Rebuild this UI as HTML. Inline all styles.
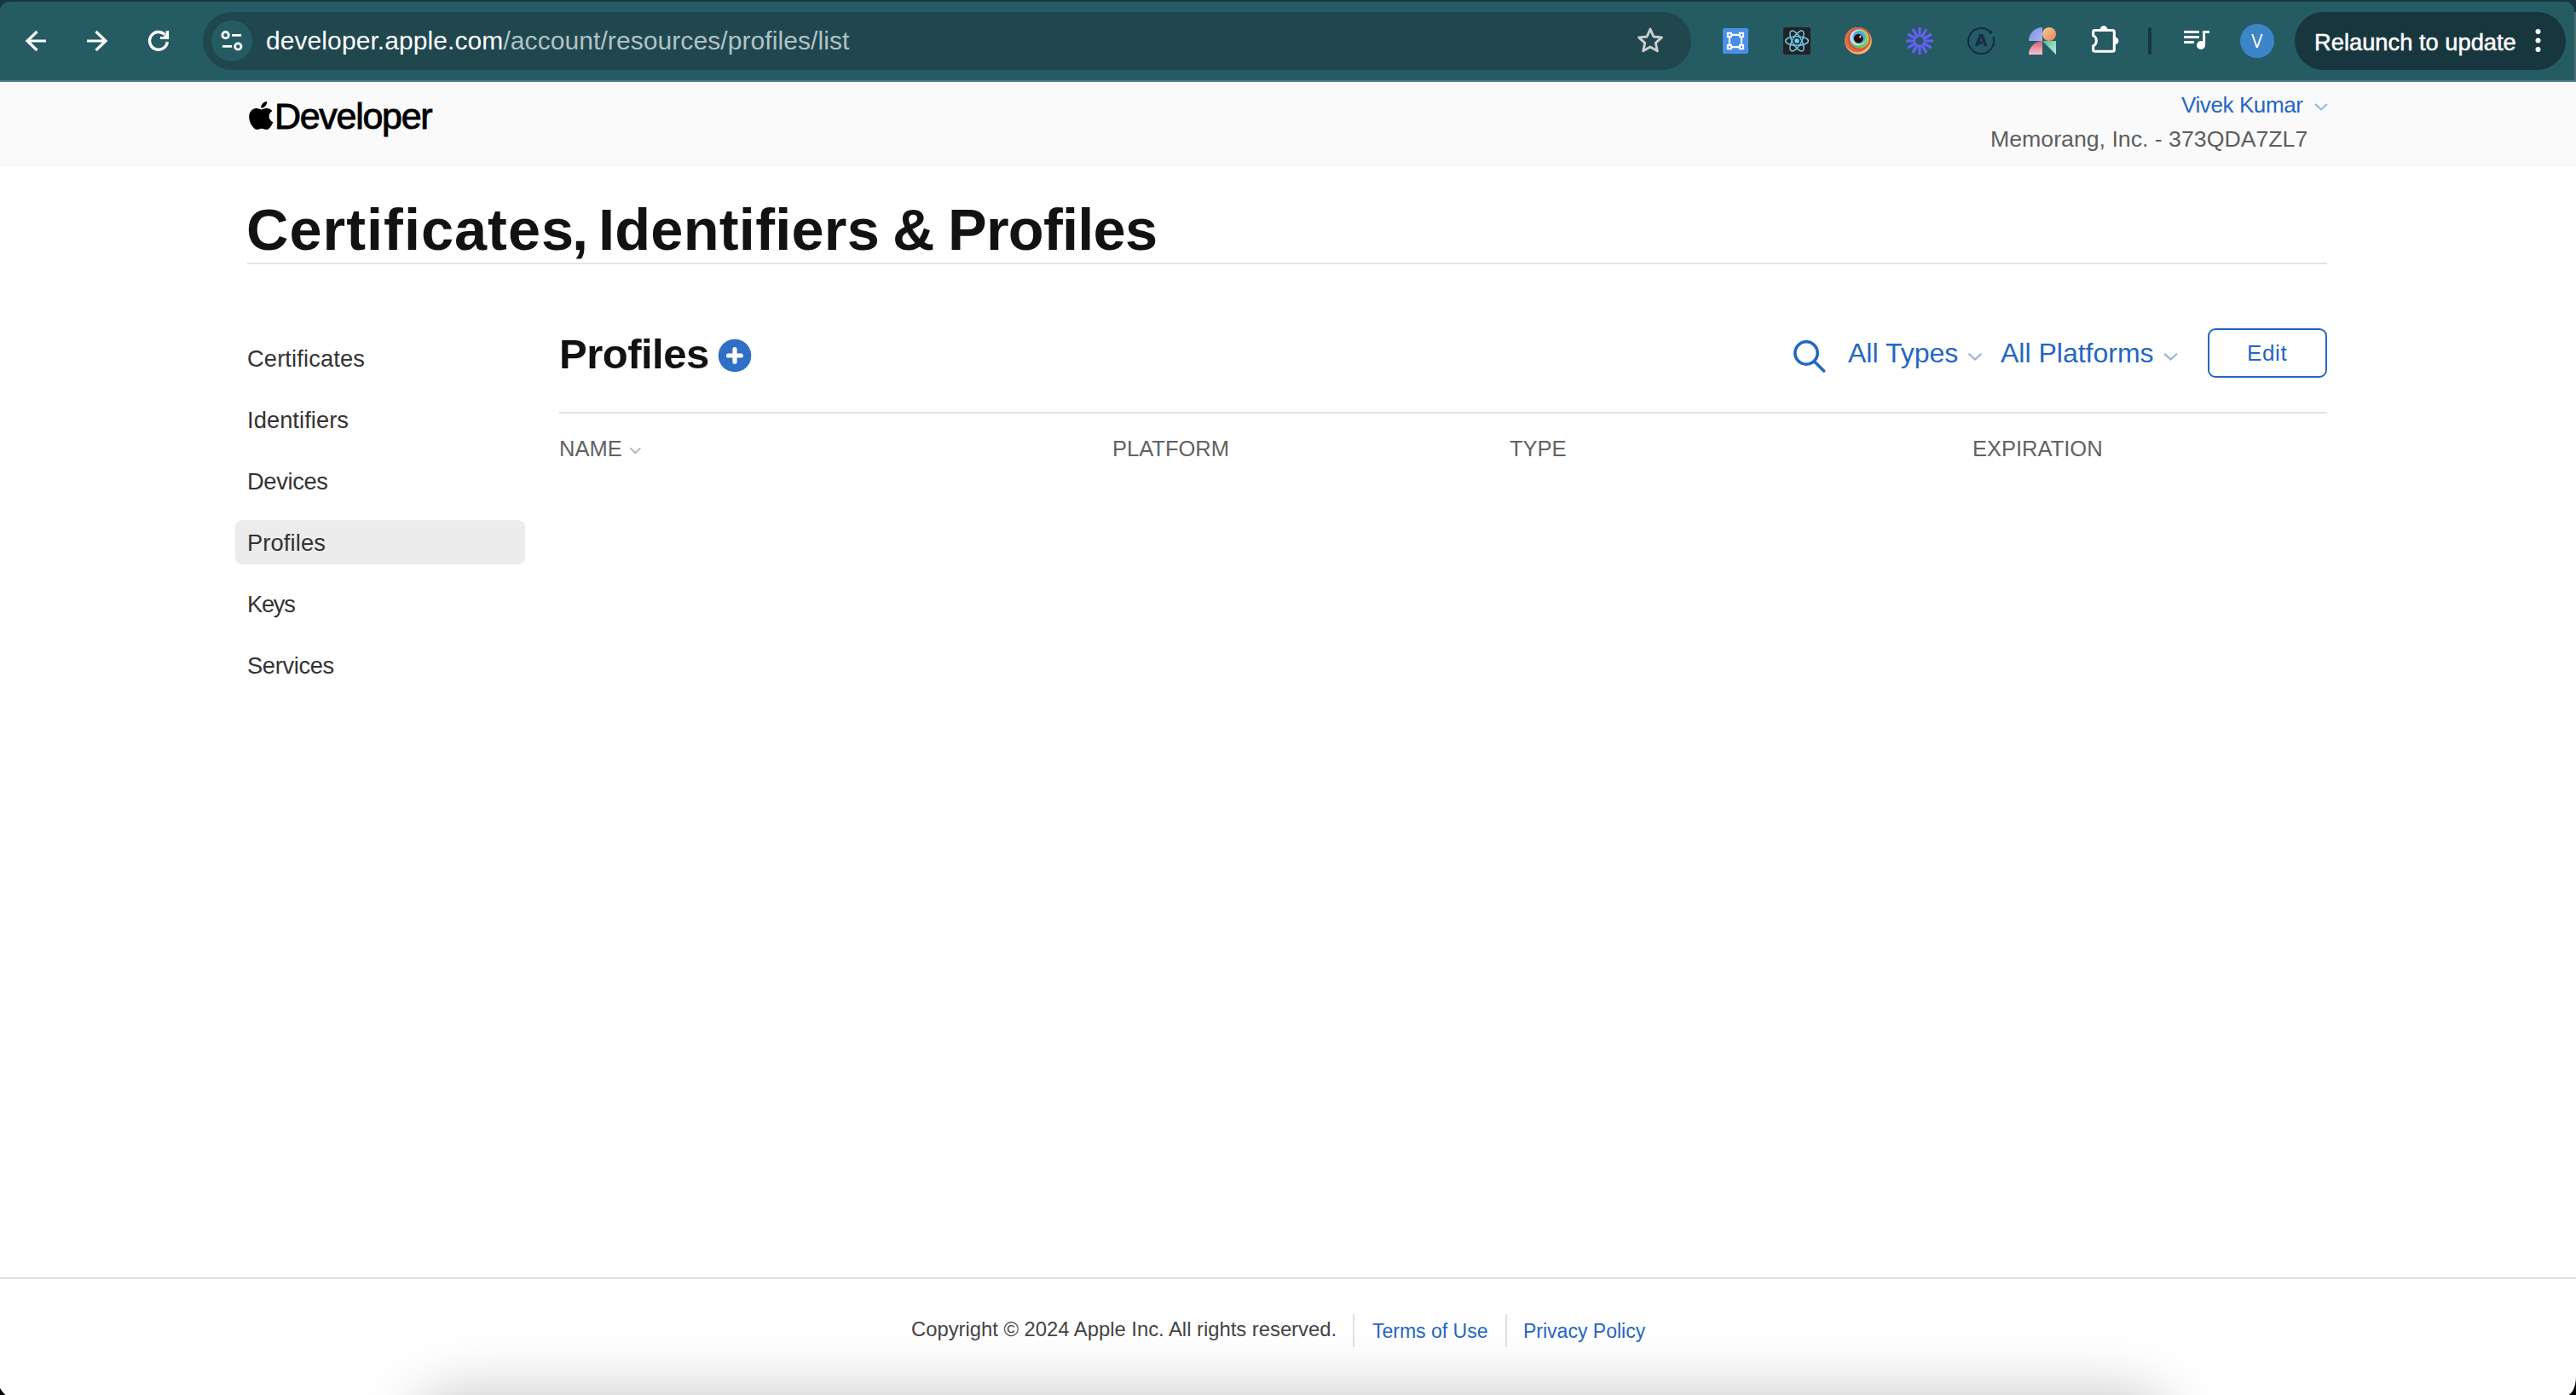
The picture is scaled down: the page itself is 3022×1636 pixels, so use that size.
<!DOCTYPE html>
<html>
<head>
<meta charset="utf-8">
<style>
html,body{margin:0;padding:0;}
body{width:3022px;height:1636px;position:relative;overflow:hidden;background:#fff;font-family:"Liberation Sans",sans-serif;}
.a{position:absolute;white-space:nowrap;line-height:1;}
#header{position:absolute;left:0;top:96px;width:3022px;height:100px;background:#fafafa;}
.ttl{top:235.5px;font-size:68.5px;font-weight:700;color:#121212;}
.side{font-size:27.3px;color:#333;}
.th{font-size:25.5px;color:#626262;}
.blue{color:#2566c3;}
</style>
</head>
<body>
<svg style="position:absolute;left:0;top:0" width="3022" height="96" viewBox="0 0 3022 96">
<rect x="0" y="0" width="3022" height="96" fill="#17363d"/>
<path d="M0 96 V13 A11 11 0 0 1 11 2 H3009 A11 11 0 0 1 3020 13 V96 Z" fill="#255b62"/>
<rect x="3020" y="14" width="2" height="82" fill="#4b6d72"/>
<rect x="0" y="94" width="3022" height="2" fill="#497a81"/>
<!-- nav -->
<g stroke="#fff" stroke-width="3.2" fill="none" stroke-linecap="butt">
<path d="M32 48 H54 M43.5 37 L32 48 L43.5 59"/>
<path d="M102 48 H124 M112.5 37 L124 48 L112.5 59"/>
<path d="M196.3 49 A10.4 10.4 0 1 1 193.3 40.5" stroke-width="3.4"/>
</g>
<path d="M194.7 36 H198.1 V46.1 H187.9 V42.9 H191.8 L194.7 39.8 Z" fill="#fff"/>
<!-- omnibox -->
<rect x="238" y="14" width="1746" height="68" rx="34" fill="#20474e"/>
<circle cx="272" cy="48" r="24" fill="#255b62"/>
<g stroke="#fff" stroke-width="2.8" fill="none">
<circle cx="264.6" cy="41.2" r="3.7"/>
<circle cx="279.3" cy="54.5" r="3.7"/>
<path d="M272.1 41.3 H283.1 M260.9 54.4 H272.1"/>
</g>
<path d="M1936.00 34.10 L1939.88 42.96 L1949.51 43.91 L1942.28 50.34 L1944.35 59.79 L1936.00 54.90 L1927.65 59.79 L1929.72 50.34 L1922.49 43.91 L1932.12 42.96 Z" fill="none" stroke="#cacdce" stroke-width="2.9" stroke-linejoin="round"/>
<!-- ext 1 -->
<rect x="2021" y="33" width="30" height="30" rx="2" fill="#4a8fe6"/>
<path d="M2028.9 40.9 H2043 V55.1 H2028.9 Z" fill="none" stroke="#fff" stroke-width="2.2"/>
<g fill="#fff">
<rect x="2025.8" y="37.8" width="6.2" height="6.2"/><rect x="2039.9" y="37.8" width="6.2" height="6.2"/>
<rect x="2025.8" y="52" width="6.2" height="6.2"/><rect x="2039.9" y="52" width="6.2" height="6.2"/>
</g>
<g fill="#3f86e2">
<rect x="2027.9" y="39.9" width="2" height="2"/><rect x="2042" y="39.9" width="2" height="2"/>
<rect x="2027.9" y="54.1" width="2" height="2"/><rect x="2042" y="54.1" width="2" height="2"/>
</g>
<!-- ext 2 react -->
<rect x="2092" y="32" width="32" height="32" rx="2.5" fill="#222"/>
<g fill="none" stroke="#6cc9ec" stroke-width="1.5">
<ellipse cx="2108" cy="48" rx="13.4" ry="5.2"/>
<ellipse cx="2108" cy="48" rx="13.4" ry="5.2" transform="rotate(60 2108 48)"/>
<ellipse cx="2108" cy="48" rx="13.4" ry="5.2" transform="rotate(120 2108 48)"/>
</g>
<circle cx="2108" cy="48" r="4.3" fill="#222"/>
<circle cx="2108" cy="48" r="2.8" fill="#72cdf0"/>
<!-- ext 3 eye -->
<defs><linearGradient id="gg" x1="1" y1="0" x2="0" y2="1"><stop offset="0" stop-color="#aee05e"/><stop offset="1" stop-color="#4db457"/></linearGradient></defs>
<circle cx="2180" cy="47.9" r="15.8" fill="#f2b868"/>
<circle cx="2178.8" cy="46.6" r="14.6" fill="#de6b42"/>
<circle cx="2181.3" cy="45.6" r="13.3" fill="#e2494a"/>
<circle cx="2181.3" cy="45.5" r="11.4" fill="url(#gg)"/>
<circle cx="2179.5" cy="44.3" r="9.2" fill="#b9e1f0"/>
<circle cx="2181.2" cy="43.7" r="7.6" fill="#48ade0"/>
<circle cx="2180.3" cy="45.2" r="5.4" fill="#2a0a06"/>
<ellipse cx="2182.4" cy="43" rx="0.9" ry="1.6" transform="rotate(30 2182.4 43)" fill="#fff"/>
<!-- ext 4 asterisk -->
<g stroke="#655ff6" stroke-width="3.2">
<line x1="2252.00" y1="42.40" x2="2252.00" y2="32.00"/><line x1="2254.80" y1="43.15" x2="2260.00" y2="34.14"/><line x1="2256.85" y1="45.20" x2="2265.86" y2="40.00"/><line x1="2257.60" y1="48.00" x2="2268.00" y2="48.00"/><line x1="2256.85" y1="50.80" x2="2265.86" y2="56.00"/><line x1="2254.80" y1="52.85" x2="2260.00" y2="61.86"/><line x1="2252.00" y1="53.60" x2="2252.00" y2="64.00"/><line x1="2249.20" y1="52.85" x2="2244.00" y2="61.86"/><line x1="2247.15" y1="50.80" x2="2238.14" y2="56.00"/><line x1="2246.40" y1="48.00" x2="2236.00" y2="48.00"/><line x1="2247.15" y1="45.20" x2="2238.14" y2="40.00"/><line x1="2249.20" y1="43.15" x2="2244.00" y2="34.14"/>
</g>
<circle cx="2252" cy="48" r="6" fill="none" stroke="#655ff6" stroke-width="2.4"/>
<!-- ext 5 A -->
<path d="M2338.3 43.3 A15 15 0 1 1 2335.1 37.9" fill="none" stroke="#172a4c" stroke-width="2"/>
<circle cx="2335.3" cy="37.7" r="2" fill="#172a4c"/>
<path d="M2316.8 54.1 L2322.3 40.1 H2326.2 L2331.6 54.1 H2327.8 L2324.2 43.4 L2320.6 54.1 Z M2320.6 48.6 H2325.8 V51.8 H2320.6 Z" fill="#172a4c"/>
<!-- ext 6 figma-like -->
<defs>
<linearGradient id="g1" x1="0" y1="0" x2="1" y2="1"><stop offset="0" stop-color="#7f8fe6"/><stop offset="1" stop-color="#a9b6ec"/></linearGradient>
<linearGradient id="g2" x1="0" y1="0" x2="1" y2="1"><stop offset="0" stop-color="#f6c7a0"/><stop offset="1" stop-color="#ec8650"/></linearGradient>
<linearGradient id="g3" x1="0" y1="0" x2="0" y2="1"><stop offset="0" stop-color="#d36076"/><stop offset="1" stop-color="#f2c5d0"/></linearGradient>
<linearGradient id="g4" x1="0" y1="0" x2="1" y2="1"><stop offset="0" stop-color="#5fb894"/><stop offset="1" stop-color="#b7f0da"/></linearGradient>
</defs>
<path d="M2396 32 V48 H2380 A16 16 0 0 1 2396 32 Z" fill="url(#g1)"/>
<circle cx="2404" cy="40" r="8" fill="url(#g2)"/>
<path d="M2396 48 V64 H2380 A16 16 0 0 1 2396 48 Z" fill="url(#g3)"/>
<path d="M2396 48 H2412 V64 Z" fill="url(#g4)"/>
<!-- puzzle -->
<path d="M2457.6 35.5 H2478.3 A2 2 0 0 1 2480.3 37.5 V58.3 A2 2 0 0 1 2478.3 60.3 H2457.6 A2 2 0 0 1 2455.6 58.3 V54 A7.1 7.1 0 0 0 2455.6 41.5 V37.5 A2 2 0 0 1 2457.6 35.5 Z" fill="none" stroke="#fff" stroke-width="3.1"/><path d="M2463.6 34.5 A4.4 4.4 0 0 1 2472.4 34.5 Z M2481 43.4 A4.4 4.4 0 0 1 2481 52.2 Z" fill="#fff"/>
<rect x="2520" y="32" width="4" height="32" rx="2" fill="#17363d"/>
<!-- media -->
<g fill="#fff">
<rect x="2562" y="36" width="18" height="3"/>
<rect x="2562" y="42" width="18" height="3"/>
<rect x="2562" y="48" width="12" height="3"/>
<rect x="2584.1" y="36" width="3" height="17"/>
<rect x="2584.1" y="36" width="7.9" height="3"/>
<circle cx="2582" cy="53" r="5"/>
</g>
<circle cx="2648" cy="48" r="20" fill="#3d85c9"/>
<path d="M2641.2 40.1 H2643.3 L2647.9 53.3 L2652.5 40.1 H2654.6 L2649 55.9 H2646.8 Z" fill="#fff"/>
<!-- relaunch -->
<rect x="2692" y="14" width="318" height="68" rx="34" fill="#17363d"/>
<g fill="#fff"><circle cx="2977.5" cy="37" r="3"/><circle cx="2977.5" cy="47.5" r="3"/><circle cx="2977.5" cy="58" r="3"/></g>
</svg>
<div class="a" style="left:312px;top:32.6px;font-size:30px;letter-spacing:0.08px;color:#fff;">developer.apple.com<span style="color:#b1c2c4">/account/resources/profiles/list</span></div>
<div class="a" style="left:2715px;top:36px;font-size:27.3px;color:#fff;-webkit-text-stroke:0.5px #fff;">Relaunch to update</div>
<div id="header"></div>
<svg style="position:absolute;left:288.8px;top:118.6px" width="34.5" height="33" viewBox="0 0 24 24" preserveAspectRatio="none"><path d="M12.152 6.896c-.948 0-2.415-1.078-3.96-1.04-2.04.027-3.91 1.183-4.961 3.014-2.117 3.675-.546 9.103 1.519 12.09 1.013 1.454 2.208 3.09 3.792 3.039 1.52-.065 2.09-.987 3.935-.987 1.831 0 2.35.987 3.96.948 1.637-.026 2.676-1.48 3.676-2.948 1.156-1.688 1.636-3.325 1.662-3.415-.039-.013-3.182-1.221-3.22-4.857-.026-3.04 2.48-4.494 2.597-4.559-1.429-2.09-3.623-2.324-4.39-2.376-2-.156-3.675 1.09-4.61 1.09zM15.53 3.83c.843-1.012 1.4-2.427 1.245-3.83-1.207.052-2.662.805-3.532 1.818-.78.896-1.454 2.338-1.273 3.714 1.338.104 2.715-.688 3.559-1.701" fill="#000"/></svg>
<div class="a" style="left:322px;top:114.5px;font-size:43px;color:#000;letter-spacing:-1.3px;-webkit-text-stroke:0.9px #000;">Developer</div>
<div class="a" style="left:2559px;top:110px;font-size:26px;color:#2566c3;letter-spacing:-0.4px;">Vivek Kumar</div>
<svg style="position:absolute;left:2714px;top:119px" width="18" height="12"><path d="M2 3 L9 9.5 L16 3" fill="none" stroke="#93b4e0" stroke-width="2"/></svg>
<div class="a" style="left:2335px;top:150.3px;font-size:26.7px;color:#5e5e5e;">Memorang, Inc. - 373QDA7ZL7</div>

<!-- page -->
<div class="a ttl" style="left:289px;letter-spacing:1.0px;">Certificates<span style="margin-left:-3px">,</span></div>
<div class="a ttl" style="left:702px;letter-spacing:0.25px;">Identifiers</div>
<div class="a ttl" style="left:1047px;">&amp;</div>
<div class="a ttl" style="left:1112px;letter-spacing:-0.75px;">Profiles</div>
<div style="position:absolute;left:290px;top:308px;width:2440px;height:2px;background:#e3e3e3;"></div>

<div style="position:absolute;left:276px;top:610px;width:340px;height:52px;background:#ececec;border-radius:8px;"></div>
<div class="a side" style="left:290px;top:407px;letter-spacing:0.13px;">Certificates</div>
<div class="a side" style="left:290px;top:479px;letter-spacing:0.06px;">Identifiers</div>
<div class="a side" style="left:290px;top:551px;letter-spacing:-0.37px;">Devices</div>
<div class="a side" style="left:290px;top:623px;letter-spacing:0.13px;">Profiles</div>
<div class="a side" style="left:290px;top:695px;letter-spacing:-1.3px;">Keys</div>
<div class="a side" style="left:290px;top:767px;letter-spacing:-0.36px;">Services</div>

<div class="a" style="left:656px;top:391px;font-size:49px;font-weight:700;color:#121212;letter-spacing:-0.5px;">Profiles</div>

<div class="a blue" style="left:2168px;top:398px;font-size:32px;">All Types</div>
<div class="a blue" style="left:2347px;top:398px;font-size:32px;">All Platforms</div>
<div style="position:absolute;left:2590px;top:385px;width:136px;height:54px;border:2px solid #2566c3;border-radius:9px;"></div>
<div class="a blue" style="left:2636px;top:400.5px;font-size:26px;letter-spacing:0.6px;">Edit</div>

<div style="position:absolute;left:656px;top:483px;width:2074px;height:2px;background:#e3e3e3;"></div>
<div class="a th" style="left:656px;top:513.5px;">NAME</div>
<div class="a th" style="left:1305px;top:513.5px;">PLATFORM</div>
<div class="a th" style="left:1771px;top:513.5px;">TYPE</div>
<div class="a th" style="left:2314px;top:513.5px;">EXPIRATION</div>

<svg style="position:absolute;left:0;top:0;overflow:visible" width="3022" height="600">
<circle cx="862" cy="417" r="19.3" fill="#2f6fc6"/>
<path d="M862 409.7 V424.3 M854.5 417 H869.3" stroke="#fff" stroke-width="5.2" stroke-linecap="round"/>
<g fill="none" stroke="#2566c3" stroke-width="3.6" stroke-linecap="round">
<circle cx="2119" cy="414" r="13.2"/>
<path d="M2129 424.5 L2139.7 435"/>
</g>
<g fill="none" stroke="#93b4e0" stroke-width="2.2">
<path d="M2309.5 414.8 L2317 421.6 L2324.5 414.8"/>
<path d="M2539 414.8 L2546.5 421.6 L2554 414.8"/>
</g>
<path d="M739.3 525.4 L745.3 531.2 L751.3 525.4" fill="none" stroke="#b5b5b5" stroke-width="2"/>
</svg>
<!-- footer -->
<div style="position:absolute;left:0;top:1498px;width:3022px;height:2px;background:#e0e0e0;"></div>
<div class="a" style="left:1069px;top:1546.5px;font-size:23.8px;color:#444;">Copyright © 2024 Apple Inc. All rights reserved.</div>
<div style="position:absolute;left:1587px;top:1541px;width:2px;height:39px;background:#e0e0e0;"></div>
<div class="a blue" style="left:1610px;top:1549.5px;font-size:23px;">Terms of Use</div>
<div style="position:absolute;left:1766px;top:1541px;width:2px;height:39px;background:#e0e0e0;"></div>
<div class="a blue" style="left:1787px;top:1549.5px;font-size:23px;">Privacy Policy</div>

<div style="position:absolute;left:510px;top:1662px;width:2010px;height:60px;border-radius:30px;background:#000;box-shadow:0 0 70px 30px rgba(0,0,0,0.22);opacity:1;"></div>
<svg style="position:absolute;left:0;top:1600px" width="3022" height="36"><path d="M0 28 C2 31 4 34 6.5 36 H0 Z" fill="#000"/><path d="M3022 14 C3022 26 3018 33 3013.5 36 H3022 Z" fill="#000"/></svg>
</body>
</html>
